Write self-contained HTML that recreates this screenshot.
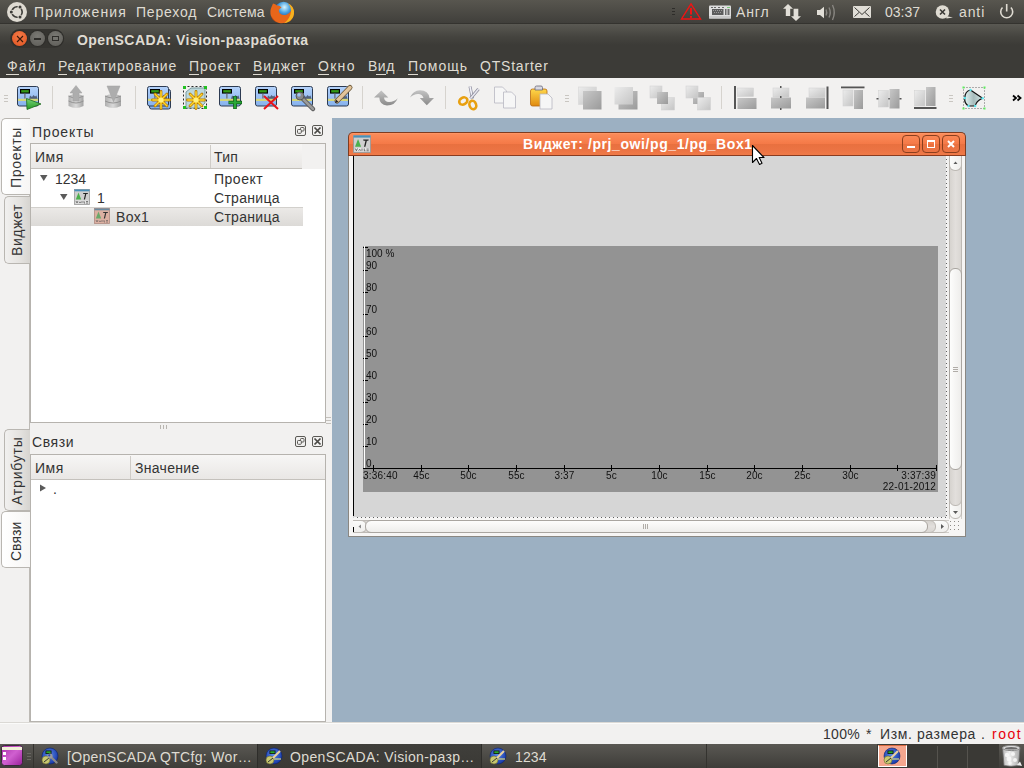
<!DOCTYPE html>
<html><head><meta charset="utf-8">
<style>
*{box-sizing:border-box;margin:0;padding:0}
html,body{width:1024px;height:768px;overflow:hidden;background:#f2f1f0;font-family:"Liberation Sans",sans-serif;font-size:13px;color:#3c3c3c;position:relative}
.a{position:absolute}
.t{position:absolute;white-space:pre;line-height:1}
svg{position:absolute;overflow:visible}
#toppanel{left:0;top:0;width:1024px;height:24px;background:linear-gradient(#58564f,#403f3b);border-bottom:1px solid #34332f}
#titlebar{left:0;top:24px;width:1024px;height:28px;background:linear-gradient(#5a5953,#45443f 45%,#3c3b37 75%)}
#menubar{left:0;top:52px;width:1024px;height:26px;background:#3c3b37}
#toolbar{left:0;top:78px;width:1024px;height:40px;background:#f2f1f0}
.pt{color:#dfdbd2;font-size:14px}
.mt{color:#dfdbd2;font-size:14px}
.ul{position:absolute;height:1px;background:#dfdbd2}
#mdi{left:332px;top:118px;width:692px;height:604px;background:#9cb0c2}
#status{left:0;top:722px;width:1024px;height:22px;background:#f2f1f0}
#bottompanel{left:0;top:744px;width:1024px;height:24px;background:linear-gradient(#4a4944,#3c3b37)}
.box{position:absolute;background:#fff;border:1px solid #b6b3ae}
.hdr{position:absolute;background:linear-gradient(#f7f6f5,#e9e7e5);border-bottom:1px solid #c4c1bc}
.tab{position:absolute;border:1px solid #b9b6b1;border-right:none;border-radius:5px 0 0 5px;background:linear-gradient(90deg,#f1f0ef,#e4e2df 60%,#d6d4d0)}
.tabsel{background:linear-gradient(90deg,#ffffff,#f7f6f5)}
.vt{position:absolute;white-space:pre;line-height:1;transform:rotate(-90deg);transform-origin:0 0;font-size:14px;color:#333}
.dbtn{position:absolute;width:11px;height:11px;border:1px solid #5a5955;border-radius:2px}
.cl{font-size:10px;color:#111;will-change:transform}
.tb{color:#333;font-size:14px}
</style></head><body>

<!-- TOP PANEL -->
<div id="toppanel" class="a"></div>
<div class="t pt" style="left:34px;top:5px;letter-spacing:1.1px">Приложения</div>
<div class="t pt" style="left:136px;top:5px;letter-spacing:0.8px">Переход</div>
<div class="t pt" style="left:207px;top:5px;letter-spacing:0.2px">Система</div>
<div class="t pt" style="left:736px;top:5px;letter-spacing:0.9px">Англ</div>
<div class="t pt" style="left:885px;top:5px;letter-spacing:0px">03:37</div>
<div class="t pt" style="left:959px;top:5px;letter-spacing:0.9px">anti</div>


<svg style="left:0;top:0" width="1024" height="24" viewBox="0 0 1024 24">
<defs>
<radialGradient id="gff" cx=".55" cy=".3" r=".7"><stop offset="0" stop-color="#d8f6ff"/><stop offset=".45" stop-color="#48a0e0"/><stop offset="1" stop-color="#0a3088"/></radialGradient>
</defs>
<!-- ubuntu logo -->
<circle cx="17" cy="12" r="10" fill="#dfdbd2"/>
<circle cx="17" cy="12" r="5.2" fill="none" stroke="#3c3b37" stroke-width="1.6"/>
<g fill="#dfdbd2"><circle cx="11.8" cy="12" r="2.2"/><circle cx="19.6" cy="7.5" r="2.2"/><circle cx="19.6" cy="16.5" r="2.2"/></g>
<g fill="#3c3b37"><circle cx="11.3" cy="12" r="1.5"/><circle cx="20" cy="7" r="1.5"/><circle cx="20" cy="17" r="1.5"/></g>
<!-- firefox -->
<circle cx="283.5" cy="10.8" r="9" fill="url(#gff)"/>
<path d="M273 3.5 Q275.5 4 277 5.5 Q279.5 5 281.5 7.5 L279.5 9 Q278 11 280 13.5 Q283 16 287 14.5 Q291 12.5 292 8 Q290 5 288 3.5 Q293 5.5 294 11 Q294.5 17 290 21 Q285 24 279 23 Q273 21.5 271 16 Q269.5 11 271.5 7 Z" fill="#e8661a"/>
<path d="M288 3.5 Q293 5.5 294 11 Q294.5 17 290 21 Q287 23 284 23.3 Q290 19 291 12 Q291.5 7 288 3.5 Z" fill="#f6b21e"/>
<path d="M271 16 Q273 21.5 279 23 Q275 22 272.5 18 Z" fill="#b83a0a"/>
<!-- grip -->
<g fill="#2e2d2a"><rect x="672" y="8" width="3" height="1"/><rect x="672" y="11" width="3" height="1"/><rect x="672" y="14" width="3" height="1"/></g>
<!-- warning -->
<path d="M691 3.8 L700.5 19 H681.5 Z" fill="none" stroke="#f01414" stroke-width="1.4" stroke-linejoin="miter"/>
<rect x="690" y="8" width="2" height="6.5" fill="#f01414"/><rect x="690" y="16" width="2" height="1.8" fill="#f01414"/>
<!-- keyboard -->
<rect x="709" y="5.5" width="22" height="13" rx="1" fill="#dedede"/>
<rect x="709" y="16" width="22" height="2.5" fill="#c8c8c8"/>
<g fill="#6a6a6a"><rect x="711" y="7" width="2" height="1"/><rect x="714" y="7" width="2" height="1"/><rect x="718" y="7" width="2" height="1"/><rect x="722" y="7" width="2" height="1"/></g>
<rect x="712" y="9" width="11.5" height="6" fill="#5c5c5c"/>
<g fill="#9a9a9a"><rect x="713" y="10" width="1" height="1"/><rect x="715" y="10" width="1" height="1"/><rect x="717" y="10" width="1" height="1"/><rect x="719" y="10" width="1" height="1"/><rect x="721" y="10" width="1" height="1"/><rect x="714" y="12" width="1" height="1"/><rect x="716" y="12" width="1" height="1"/><rect x="718" y="12" width="1" height="1"/><rect x="720" y="12" width="1" height="1"/></g>
<rect x="725" y="9" width="1.5" height="6" fill="#6a6a6a"/><rect x="727.5" y="9" width="2" height="6" fill="#6a6a6a"/>
<rect x="727" y="7" width="3" height="1" fill="#78c878"/>
<!-- network -->
<path d="M788 4 L793 8.8 H790.2 V16 H785.8 V8.8 H783 Z" fill="#e2dfd8"/>
<path d="M796 21 L801 16.2 H798.3 V8.8 H793.6 V16.2 H791 Z" fill="#e2dfd8"/>
<!-- volume -->
<path d="M817 10 H820 L824 6.8 V18.2 L820 15 H817 Z" fill="#e2dfd8"/>
<g fill="none" stroke="#8a8883" stroke-width="1.3"><path d="M826 9.5 Q827.5 12.5 826 15.5"/><path d="M829 7.5 Q831.5 12.5 829 17.5"/><path d="M832.5 5 Q836 12.5 832.5 20"/></g>
<!-- mail -->
<rect x="853" y="6" width="18" height="12" rx="1" fill="#e0ddd6"/>
<path d="M854.5 7.5 L862 14.5 L869.5 7.5 M854.5 16.5 L859 12.5 M869.5 16.5 L865 12.5" fill="none" stroke="#3a3935" stroke-width="1"/>
<!-- chat -->
<circle cx="942.5" cy="12" r="6.8" fill="#dfdbd2"/>
<path d="M946 16 L953 17.5 L946.5 18.5 Z" fill="#dfdbd2"/>
<path d="M940 9.5 L945 14.5 M945 9.5 L940 14.5" stroke="#3a3935" stroke-width="1.6"/>
<!-- power -->
<path d="M1002.5 7.5 A6 6 0 1 0 1010.9 7.5" fill="none" stroke="#dfdbd2" stroke-width="1.6"/>
<rect x="1005.9" y="4" width="1.6" height="7.5" fill="#dfdbd2"/>
</svg>

<!-- TITLE BAR -->
<div id="titlebar" class="a"></div>
<div class="t" style="left:77px;top:33px;font-size:14px;font-weight:bold;color:#dfdbd2;letter-spacing:0.45px">OpenSCADA: Vision-разработка</div>


<!-- window controls -->
<div class="a" style="left:10px;top:29px;width:54px;height:19px;border-radius:10px;background:#353430"></div>
<div class="a" style="left:12px;top:31px;width:15px;height:15px;border-radius:50%;background:radial-gradient(circle at 50% 35%,#f47a48,#e0531f);box-shadow:0 0 0 1px #2e2d2a"></div>
<svg style="left:16px;top:35px" width="8" height="8"><path d="M1 1L7 7M7 1L1 7" stroke="#3a1a0c" stroke-width="1.1"/></svg>
<div class="a" style="left:30px;top:31px;width:15px;height:15px;border-radius:50%;background:radial-gradient(circle at 50% 35%,#7a7974,#5c5b56);box-shadow:0 0 0 1px #2e2d2a"></div>
<div class="a" style="left:34px;top:38px;width:7px;height:1.5px;background:#2e2d2a"></div>
<div class="a" style="left:48px;top:31px;width:15px;height:15px;border-radius:50%;background:radial-gradient(circle at 50% 35%,#7a7974,#5c5b56);box-shadow:0 0 0 1px #2e2d2a"></div>
<div class="a" style="left:52px;top:36px;width:7px;height:5px;border:1px solid #2e2d2a"></div>

<!-- MENU BAR -->
<div id="menubar" class="a"></div>
<div class="t mt" style="left:7px;top:59px;letter-spacing:1.3px">Файл</div>
<div class="t mt" style="left:58px;top:59px;letter-spacing:0.9px">Редактирование</div>
<div class="t mt" style="left:189px;top:59px;letter-spacing:1.0px">Проект</div>
<div class="t mt" style="left:253px;top:59px;letter-spacing:0.8px">Виджет</div>
<div class="t mt" style="left:318px;top:59px;letter-spacing:1.3px">Окно</div>
<div class="t mt" style="left:368px;top:59px;letter-spacing:0.5px">Вид</div>
<div class="t mt" style="left:408px;top:59px;letter-spacing:1.0px">Помощь</div>
<div class="t mt" style="left:480px;top:59px;letter-spacing:0.8px">QTStarter</div>

<!-- TOOLBAR -->
<div id="toolbar" class="a"></div>



<svg style="left:0;top:0" width="1024" height="768" viewBox="0 0 1024 768">
<defs>
<linearGradient id="gblue" x1="0" y1="0" x2="0" y2="1"><stop offset="0" stop-color="#b4d2fa"/><stop offset="1" stop-color="#86b2ee"/></linearGradient>
<linearGradient id="ggray" x1="0" y1="0" x2="1" y2="1"><stop offset="0" stop-color="#ececec"/><stop offset="1" stop-color="#c4c4c4"/></linearGradient>
<linearGradient id="gdark" x1="0" y1="0" x2="1" y2="1"><stop offset="0" stop-color="#c8c8c8"/><stop offset="1" stop-color="#9a9a9a"/></linearGradient>
<linearGradient id="gdb" x1="0" y1="0" x2="1" y2="0"><stop offset="0" stop-color="#a8a8a8"/><stop offset=".5" stop-color="#d8d8d8"/><stop offset="1" stop-color="#9a9a9a"/></linearGradient>
<linearGradient id="ggreen" x1="0" y1="0" x2="0" y2="1"><stop offset="0" stop-color="#7ad37a"/><stop offset="1" stop-color="#249a24"/></linearGradient>
<linearGradient id="gyel" x1="0" y1="0" x2="0" y2="1"><stop offset="0" stop-color="#ffd84a"/><stop offset="1" stop-color="#e08a10"/></linearGradient>
<symbol id="vis" width="24" height="24" viewBox="0 0 24 24" overflow="visible">
<rect x="0.5" y="0.5" width="21" height="19.5" rx="2" fill="url(#gblue)" stroke="#2d3b52"/>
<rect x="3" y="3" width="10" height="4.6" fill="#000"/>
<rect x="4.2" y="4.1" width="7.6" height="2.4" fill="#38a818" opacity=".9"/>
<rect x="7.3" y="7.6" width="1.2" height="5" fill="#6a6a6a"/>
<path d="M12 13 L13 9.5 L15 11 L16.5 9 L18 10.5 L19.5 9.5 L20.5 13 Z" fill="#394255" opacity=".75"/>
<rect x="1" y="12.8" width="20" height="2.2" fill="#d4d67a"/>
</symbol>
<symbol id="star" width="20" height="20" viewBox="-10 -10 20 20" overflow="visible">
<g stroke="#b87a00" stroke-width="2.8" stroke-linecap="round"><path d="M0 -8.5V8.5M-8.5 0H8.5M-6 -6L6 6M-6 6L6 -6"/></g>
<g stroke="#ffd62a" stroke-width="1.5" stroke-linecap="round"><path d="M0 -8.2V8.2M-8.2 0H8.2M-5.8 -5.8L5.8 5.8M-5.8 5.8L5.8 -5.8"/></g>
<circle r="2.6" fill="#fff080"/>
</symbol>
</defs>
<!-- grip -->
<g fill="#c9c6c1"><rect x="4" y="95" width="4" height="1"/><rect x="4" y="98" width="4" height="1"/><rect x="4" y="101" width="4" height="1"/></g>
<!-- icon1 play -->
<use href="#vis" x="17" y="86"/>
<path d="M26.5 98.5 L41 104 L27 109.5 Z" fill="url(#ggreen)" stroke="#1d6a1d" stroke-width=".8"/>
<rect x="52" y="86" width="1" height="23" fill="#d6d3ce"/>
<!-- db up -->
<g opacity=".9">
<path d="M68.5 96 Q76 92 83.5 96 V106 Q76 110 68.5 106 Z" fill="url(#gdb)"/>
<path d="M68.5 101 Q76 105 83.5 101" stroke="#8a8a8a" fill="none"/>
<path d="M68.5 96 Q76 100 83.5 96" stroke="#8a8a8a" fill="none"/>
<path d="M76 85.5 L82 93 H79 V101 H73 V93 H70 Z" fill="#a6a6a6" stroke="#9a9a9a" stroke-width=".5"/>
</g>
<!-- db down -->
<g opacity=".9">
<path d="M105 96 Q113 92 121 96 V106 Q113 110 105 106 Z" fill="url(#gdb)"/>
<path d="M105 101 Q113 105 121 101" stroke="#8a8a8a" fill="none"/>
<path d="M105 96 Q113 100 121 96" stroke="#8a8a8a" fill="none"/>
<path d="M107 86 H120 L113.5 102 Z" fill="#a6a6a6" stroke="#9a9a9a" stroke-width=".5"/>
</g>
<rect x="135" y="86" width="1" height="23" fill="#d6d3ce"/>
<!-- icon4 stacked + star -->
<rect x="149.5" y="89.5" width="21" height="19.5" rx="2" fill="#86b2ee" stroke="#2d3b52"/>
<use href="#vis" x="147" y="86"/>
<use href="#star" x="151" y="90"/>
<!-- icon5 dashed cube + star -->
<rect x="183.5" y="86.5" width="23" height="22" fill="none" stroke="#2a2a2a" stroke-dasharray="2 2"/>
<path d="M186 92 L191 88 H205 V103 L200 108 H186 Z" fill="#bcd8dc" stroke="#7a9aa0"/>
<g fill="#22c022"><rect x="183" y="86" width="3" height="3"/><rect x="204" y="86" width="3" height="3"/><rect x="183" y="106" width="3" height="3"/><rect x="204" y="106" width="3" height="3"/></g>
<use href="#star" x="186" y="90"/>
<!-- icon6 plus -->
<use href="#vis" x="219" y="86"/>
<path d="M235 96 V109 M228.5 102.5 H242" stroke="#0c5a14" stroke-width="3.6"/>
<path d="M235 96.5 V108.5 M229 102.5 H241.5" stroke="#2aa838" stroke-width="2"/>
<!-- icon7 red X -->
<use href="#vis" x="255" y="86"/>
<path d="M264 96 L278 109 M278 96 L264 109" stroke="#e8141a" stroke-width="2"/>
<!-- icon8 wrench -->
<use href="#vis" x="291" y="86"/>
<path d="M300 96 L313 109" stroke="#5a5a5a" stroke-width="4.5" stroke-linecap="round"/>
<path d="M300 96 L313 109" stroke="#9a9a9a" stroke-width="2.5" stroke-linecap="round"/>
<circle cx="300" cy="96" r="4" fill="#8a8a8a" stroke="#4a4a4a" stroke-width=".8"/>
<circle cx="299" cy="95" r="1.8" fill="url(#gblue)"/>
<!-- icon9 pencil -->
<use href="#vis" x="327" y="86"/>
<path d="M337 101 L350 87.5" stroke="#6e5a3c" stroke-width="5" stroke-linecap="round"/>
<path d="M337 101 L350 87.5" stroke="#e2c49a" stroke-width="3.4" stroke-linecap="round"/>
<path d="M335 103 L338.5 102 L336 99.5 Z" fill="#222"/>
<rect x="362" y="86" width="1" height="23" fill="#d6d3ce"/>
<!-- undo -->
<linearGradient id="gundo" x1="0" y1="0" x2="0" y2="1"><stop offset="0" stop-color="#c4c4c4"/><stop offset="1" stop-color="#8a8a8a"/></linearGradient>
<path d="M381.3 90.6 L388.3 97.6 H384 Q384.5 102 389 102 Q394 102 397.7 98.2 Q395 105.5 387 105.5 Q379.5 105 379.3 97.6 H374 Z" fill="url(#gundo)"/>
<!-- redo -->
<path d="M426.8 105.2 L434 98 H429.5 Q428.5 90.5 420 90.3 Q413 90.5 410 97.5 Q414 93.5 419 94 Q422.5 94.5 423.5 98 H419.8 Z" fill="url(#gundo)"/>
<rect x="445" y="86" width="1" height="23" fill="#d6d3ce"/>
<!-- scissors -->
<path d="M470 86.5 L472.5 98.5" stroke="#8a8a9a" stroke-width="3"/>
<path d="M470 86.5 L472.5 98.5" stroke="#f0f0f8" stroke-width="1.6"/>
<path d="M478.5 89 L470.5 98.5" stroke="#8a8a9a" stroke-width="3"/>
<path d="M478.5 89 L470.5 98.5" stroke="#e8e8f0" stroke-width="1.6"/>
<ellipse cx="463.3" cy="101" rx="4.3" ry="3.3" transform="rotate(-30 463.3 101)" fill="none" stroke="#e8a010" stroke-width="2.6"/>
<ellipse cx="472.8" cy="105" rx="3.3" ry="4.3" transform="rotate(-20 472.8 105)" fill="none" stroke="#e8a010" stroke-width="2.6"/>
<!-- copy -->
<path d="M494.5 87 H502.5 L506.5 91 V103 H494.5 Z" fill="#f6f6f6" stroke="#b8b8c2" stroke-width=".8"/>
<path d="M503.5 92 H511.5 L515.5 96 V108 H503.5 Z" fill="#f6f6f6" stroke="#b8b8c2" stroke-width=".8"/>
<!-- paste -->
<rect x="530.5" y="89" width="16.5" height="17" rx="2" fill="url(#gyel)" stroke="#b86a10" stroke-width=".8"/>
<path d="M535 90 V87.5 Q535 86 536.5 86 H541 Q542.5 86 542.5 87.5 V90 Z" fill="#d8d8e0" stroke="#6a6a7a" stroke-width=".8"/>
<path d="M540 94 H548 L552 98 V109 H540 Z" fill="#f6f6f6" stroke="#b8b8c2" stroke-width=".8"/>
<!-- grip 2 -->
<g fill="#c9c6c1"><rect x="565" y="95" width="4" height="1"/><rect x="565" y="98" width="4" height="1"/><rect x="565" y="101" width="4" height="1"/></g>
<!-- raise -->
<rect x="578.5" y="87" width="18" height="17.5" fill="url(#ggray)" stroke="#d8d8d8" stroke-width=".6"/>
<rect x="583" y="91" width="18.5" height="18.5" fill="url(#gdark)"/>
<!-- lower -->
<rect x="618.5" y="91" width="19" height="18.5" fill="url(#gdark)"/>
<rect x="614.5" y="87" width="18.5" height="17.5" fill="url(#ggray)"/>
<!-- icon C -->
<rect x="650" y="86" width="12" height="12" fill="url(#ggray)" stroke="#d0d0d0" stroke-width=".5"/>
<rect x="661.5" y="97.5" width="13" height="12.5" fill="url(#ggray)" stroke="#d0d0d0" stroke-width=".5"/>
<rect x="657" y="92" width="11" height="12" fill="url(#gdark)"/>
<!-- icon D -->
<rect x="693" y="92" width="11" height="12" fill="url(#gdark)"/>
<rect x="686" y="86" width="12" height="12" fill="url(#ggray)" stroke="#d0d0d0" stroke-width=".5"/>
<rect x="697.5" y="97.5" width="13" height="12.5" fill="url(#ggray)" stroke="#d0d0d0" stroke-width=".5"/>
<rect x="721" y="86" width="1" height="23" fill="#d6d3ce"/>
<!-- align left -->
<rect x="734" y="86" width="2" height="23" fill="#555"/>
<rect x="737.5" y="88" width="16" height="8.5" fill="url(#ggray)" stroke="#d0d0d0" stroke-width=".5"/>
<rect x="737.5" y="98" width="19" height="11" fill="url(#gdark)"/>
<!-- align hcenter -->
<rect x="773" y="88" width="16" height="9" fill="url(#ggray)" stroke="#d0d0d0" stroke-width=".5"/>
<rect x="771" y="97.5" width="20" height="11" fill="url(#gdark)"/>
<g fill="#555"><rect x="780" y="86" width="1.5" height="2"/><rect x="780" y="96" width="1.5" height="2"/><rect x="780" y="108" width="1.5" height="2"/></g>
<!-- align right -->
<rect x="809" y="88" width="16" height="9" fill="url(#ggray)" stroke="#d0d0d0" stroke-width=".5"/>
<rect x="806" y="97.5" width="19" height="11" fill="url(#gdark)"/>
<rect x="826.5" y="86.5" width="2" height="22.5" fill="#555"/>
<!-- align top -->
<rect x="841" y="86.5" width="23.5" height="1.8" fill="#555"/>
<rect x="843" y="90" width="10" height="16" fill="url(#ggray)" stroke="#d0d0d0" stroke-width=".5"/>
<rect x="854" y="90" width="9" height="19" fill="url(#gdark)"/>
<!-- align vcenter -->
<rect x="878.5" y="90.5" width="10" height="16.5" fill="url(#ggray)" stroke="#d0d0d0" stroke-width=".5"/>
<rect x="889.5" y="89" width="10" height="19.5" fill="url(#gdark)"/>
<g fill="#555"><rect x="876.5" y="98" width="2" height="1.5"/><rect x="888.3" y="98" width="1.5" height="1.5"/><rect x="899.5" y="98" width="2" height="1.5"/></g>
<!-- align bottom -->
<rect x="914.5" y="90.5" width="10.5" height="15.5" fill="url(#ggray)" stroke="#d0d0d0" stroke-width=".5"/>
<rect x="926" y="87" width="9.5" height="19" fill="url(#gdark)"/>
<rect x="914" y="107" width="22.5" height="2" fill="#555"/>
<!-- grip 3 -->
<g fill="#c9c6c1"><rect x="949" y="95" width="4" height="1"/><rect x="949" y="98" width="4" height="1"/><rect x="949" y="101" width="4" height="1"/></g>
<!-- edit shape -->
<linearGradient id="gshape" x1="0" y1="0" x2="1" y2="0"><stop offset="0" stop-color="#e0f4f4"/><stop offset=".5" stop-color="#a8bcbc"/><stop offset="1" stop-color="#d0e4e4"/></linearGradient>
<rect x="963.5" y="87.5" width="21" height="21" fill="none" stroke="#555" stroke-dasharray="1 2" stroke-width=".9"/>
<g fill="#5ef05e"><rect x="962.5" y="86.5" width="2" height="2"/><rect x="983.5" y="86.5" width="2" height="2"/><rect x="962.5" y="107.5" width="2" height="2"/><rect x="983.5" y="107.5" width="2" height="2"/></g>
<path d="M970.5 90 L982.6 98.2 Q976 101 975.2 106 H968.5 Q964 103 964.8 98 Q965 91 970.5 90 Z" fill="url(#gshape)" stroke="#111" stroke-width="1.2" stroke-linejoin="round"/>
<g fill="#5ae8f0"><circle cx="970.5" cy="90" r="1.2"/><circle cx="982.6" cy="98.2" r="1.2"/><circle cx="975.2" cy="106" r="1.2"/><circle cx="968.5" cy="106" r="1.2"/><circle cx="964.8" cy="98" r="1.2"/></g>
<!-- chevrons -->
<path d="M1013 95.5 L1016 98 L1013 100.5 M1017.5 95.5 L1020.5 98 L1017.5 100.5" stroke="#000" stroke-width="1.8" fill="none"/>
</svg>

<!-- LEFT DOCK TABS -->
<div class="a" style="left:29px;top:118px;width:1px;height:604px;background:#bdbab5"></div>
<div class="tab tabsel" style="left:1px;top:118px;width:29px;height:77px"></div>
<div class="vt" style="left:9px;top:188px;letter-spacing:0.7px">Проекты</div>
<div class="tab" style="left:4px;top:196px;width:26px;height:68px"></div>
<div class="vt" style="left:10px;top:256px;letter-spacing:0.6px">Виджет</div>
<div class="tab" style="left:4px;top:429px;width:26px;height:82px"></div>
<div class="vt" style="left:10px;top:505px;letter-spacing:0.8px">Атрибуты</div>
<div class="tab tabsel" style="left:1px;top:511px;width:29px;height:57px"></div>
<div class="vt" style="left:9px;top:561px;letter-spacing:0px">Связи</div>

<!-- PROJECTS DOCK -->
<div class="t tb" style="left:32px;top:125px;letter-spacing:0.9px">Проекты</div>
<div class="dbtn" style="left:295px;top:125px"></div>
<div class="dbtn" style="left:312px;top:125px"></div>
<div class="box" style="left:30px;top:143px;width:296px;height:280px"></div>
<div class="hdr" style="left:31px;top:144px;width:272px;height:25px"></div>
<div class="a" style="left:210px;top:145px;width:1px;height:23px;background:#cfccc7"></div>
<div class="a" style="left:302px;top:144px;width:23px;height:25px;background:#f2f1f0"></div>
<div class="t tb" style="left:35px;top:150px;letter-spacing:0.5px">Имя</div>
<div class="t tb" style="left:214px;top:150px;letter-spacing:0.3px">Тип</div>
<div class="a" style="left:31px;top:207px;width:272px;height:19px;background:linear-gradient(#ebe9e7,#dcdad7);border-top:1px solid #d2d0cc"></div>
<div class="t tb" style="left:55px;top:172px;letter-spacing:0px">1234</div>
<div class="t tb" style="left:214px;top:172px;letter-spacing:0.5px">Проект</div>
<div class="t tb" style="left:97px;top:191px">1</div>
<div class="t tb" style="left:214px;top:191px;letter-spacing:0.3px">Страница</div>
<div class="t tb" style="left:116px;top:210px;letter-spacing:0.3px">Box1</div>
<div class="t tb" style="left:214px;top:210px;letter-spacing:0.3px">Страница</div>

<!-- splitter grip -->
<div class="a" style="left:160px;top:425px;width:1px;height:4px;background:#b8b5b0"></div>
<div class="a" style="left:163px;top:425px;width:1px;height:4px;background:#b8b5b0"></div>
<div class="a" style="left:166px;top:425px;width:1px;height:4px;background:#b8b5b0"></div>

<!-- LINKS DOCK -->
<div class="t tb" style="left:32px;top:435px;letter-spacing:0.6px">Связи</div>
<div class="dbtn" style="left:295px;top:436px"></div>
<div class="dbtn" style="left:312px;top:436px"></div>
<div class="box" style="left:30px;top:454px;width:296px;height:268px"></div>
<div class="hdr" style="left:31px;top:455px;width:294px;height:25px"></div>
<div class="a" style="left:130px;top:456px;width:1px;height:23px;background:#cfccc7"></div>
<div class="t tb" style="left:35px;top:461px;letter-spacing:0.5px">Имя</div>
<div class="t tb" style="left:135px;top:461px;letter-spacing:0.3px">Значение</div>
<div class="t tb" style="left:53px;top:482px">.</div>

<!-- MDI AREA -->
<div id="mdi" class="a"></div>


<!-- MDI WINDOW -->
<div class="a" style="left:348px;top:150px;width:618px;height:387px;background:#f6f5f4;border:1px solid #8a8782;border-top:none"></div>
<div class="a" style="left:348px;top:132px;width:618px;height:24px;border:1px solid #7e3c20;border-bottom-color:#8a3c20;border-radius:5px 5px 0 0;background:linear-gradient(#ff9a6a 0px,#fb8a58 1.5px,#f57a48 10.5px,#e8703f 11px,#ec7444 18px,#f07a48 22px)"></div>
<div class="t" style="left:523px;top:137px;font-size:14px;font-weight:bold;color:#fff;letter-spacing:0.58px">Виджет: /prj_owi/pg_1/pg_Box1</div>
<!-- title buttons -->
<div class="a" style="left:902px;top:135px;width:18px;height:18px;border:1px solid #8a3f1e;border-radius:4px"></div>
<div class="a" style="left:922px;top:135px;width:18px;height:18px;border:1px solid #8a3f1e;border-radius:4px"></div>
<div class="a" style="left:942px;top:135px;width:18px;height:18px;border:1px solid #8a3f1e;border-radius:4px"></div>
<div class="a" style="left:907px;top:146px;width:8px;height:2px;background:#fff"></div>
<div class="a" style="left:927px;top:140px;width:8px;height:8px;border:1px solid #fff;border-top-width:2px"></div>
<svg style="left:947px;top:140px" width="8" height="8"><path d="M1 1L7 7M7 1L1 7" stroke="#fff" stroke-width="2"/></svg>
<!-- client -->
<div class="a" style="left:353px;top:156px;width:594px;height:362px;background:#d6d6d6"></div>
<div class="a" style="left:353px;top:156px;width:1px;height:360px;background:#000"></div>
<div class="a" style="left:946px;top:156px;width:1px;height:362px;background-image:linear-gradient(#f4f4f4 70%,#606060 70%);background-size:1px 4px"></div>
<div class="a" style="left:354px;top:517px;width:593px;height:1px;background-image:linear-gradient(90deg,#f4f4f4 70%,#606060 70%);background-size:4px 1px"></div>
<div class="a" style="left:947px;top:156px;width:2px;height:362px;background:#f2f1f0"></div>
<!-- vscroll -->
<div class="a" style="left:949px;top:156px;width:13px;height:363px;background:#f6f5f4;border-left:1px solid #d0cdc8;border-right:1px solid #d0cdc8"></div>
<div class="a" style="left:949px;top:494px;width:13px;height:25px;background:linear-gradient(90deg,#fbfbfa,#efeeec);border:1px solid #bdb9b4;border-radius:6px"></div>
<div class="a" style="left:949px;top:158px;width:13px;height:348px;background:linear-gradient(90deg,#d6d3cf,#e2dfdc 50%,#d9d6d2);border:1px solid #bdb9b4;border-radius:6px"></div>
<div class="a" style="left:949px;top:156px;width:13px;height:15px;background:linear-gradient(90deg,#fbfbfa,#efeeec);border:1px solid #bdb9b4;border-top:none;border-radius:0 0 6px 6px"></div>
<div class="a" style="left:949px;top:268px;width:13px;height:202px;background:linear-gradient(90deg,#fdfdfc,#eeedeb);border:1px solid #a9a5a0;border-radius:6px"></div>
<svg style="left:952px;top:160px" width="7" height="5"><path d="M1.5 4L3.5 1.5L5.5 4Z" fill="#5a5a5a"/></svg>
<svg style="left:952px;top:510px" width="7" height="5"><path d="M1 1H6L3.5 4Z" fill="#5a5a5a"/></svg>
<div class="a" style="left:953px;top:367px;width:5px;height:1px;background:#b0aca7"></div>
<div class="a" style="left:953px;top:369px;width:5px;height:1px;background:#b0aca7"></div>
<div class="a" style="left:953px;top:371px;width:5px;height:1px;background:#b0aca7"></div>
<!-- hscroll -->
<div class="a" style="left:353px;top:520px;width:596px;height:13px;background:#f6f5f4;border-top:1px solid #d0cdc8;border-bottom:1px solid #d0cdc8"></div>
<div class="a" style="left:922px;top:520px;width:27px;height:13px;background:linear-gradient(#fbfbfa,#efeeec);border:1px solid #bdb9b4;border-radius:6px"></div>
<div class="a" style="left:355px;top:520px;width:581px;height:13px;background:linear-gradient(#d6d3cf,#e2dfdc 50%,#d9d6d2);border:1px solid #bdb9b4;border-radius:6px"></div>
<div class="a" style="left:353px;top:520px;width:14px;height:13px;background:linear-gradient(#fbfbfa,#efeeec);border:1px solid #bdb9b4;border-left:none;border-radius:0 6px 6px 0"></div>
<div class="a" style="left:365px;top:520px;width:563px;height:13px;background:linear-gradient(#fdfdfc,#eeedeb);border:1px solid #a9a5a0;border-radius:6px"></div>
<svg style="left:357px;top:523px" width="5" height="7"><path d="M4 1.5L1.5 3.5L4 5.5Z" fill="#8a8a8a"/></svg>
<svg style="left:940px;top:523px" width="5" height="7"><path d="M1 1V6L4 3.5Z" fill="#5a5a5a"/></svg>
<div class="a" style="left:643px;top:524px;width:1px;height:5px;background:#b0aca7"></div>
<div class="a" style="left:645px;top:524px;width:1px;height:5px;background:#b0aca7"></div>
<div class="a" style="left:647px;top:524px;width:1px;height:5px;background:#b0aca7"></div>
<svg style="left:950px;top:521px" width="11" height="11"><g fill="#8e8b87"><rect x="0" y="0" width="1" height="1"/><rect x="4" y="0" width="1" height="1"/><rect x="8" y="0" width="1" height="1"/><rect x="0" y="4" width="1" height="1"/><rect x="4" y="4" width="1" height="1"/><rect x="8" y="4" width="1" height="1"/><rect x="0" y="8" width="1" height="1"/><rect x="4" y="8" width="1" height="1"/><rect x="8" y="8" width="1" height="1"/></g></svg>
<div class="a" style="left:353px;top:527px;width:1px;height:5px;background:#000"></div>

<!-- CHART -->
<div class="a" style="left:363px;top:246px;width:575px;height:246px;background:#939393"></div>
<div class="a" style="left:363px;top:468px;width:574px;height:1px;background:#000"></div>
<div class="a" style="left:363px;top:247px;width:5px;height:1px;background:#000"></div>
<div class="a" style="left:363px;top:270px;width:5px;height:1px;background:#000"></div>
<div class="a" style="left:363px;top:292px;width:5px;height:1px;background:#000"></div>
<div class="a" style="left:363px;top:314px;width:5px;height:1px;background:#000"></div>
<div class="a" style="left:363px;top:336px;width:5px;height:1px;background:#000"></div>
<div class="a" style="left:363px;top:358px;width:5px;height:1px;background:#000"></div>
<div class="a" style="left:363px;top:380px;width:5px;height:1px;background:#000"></div>
<div class="a" style="left:363px;top:402px;width:5px;height:1px;background:#000"></div>
<div class="a" style="left:363px;top:424px;width:5px;height:1px;background:#000"></div>
<div class="a" style="left:363px;top:446px;width:5px;height:1px;background:#000"></div>
<div class="a" style="left:363px;top:468px;width:5px;height:1px;background:#000"></div>
<div class="t cl" style="left:366px;top:249px">100 %</div>
<div class="t cl" style="left:366px;top:261px">90</div>
<div class="t cl" style="left:366px;top:283px">80</div>
<div class="t cl" style="left:366px;top:305px">70</div>
<div class="t cl" style="left:366px;top:327px">60</div>
<div class="t cl" style="left:366px;top:349px">50</div>
<div class="t cl" style="left:366px;top:371px">40</div>
<div class="t cl" style="left:366px;top:393px">30</div>
<div class="t cl" style="left:366px;top:415px">20</div>
<div class="t cl" style="left:366px;top:437px">10</div>
<div class="t cl" style="left:366px;top:459px">0</div>
<div class="a" style="left:364px;top:246px;width:1px;height:222px;background:#fff"></div>
<div class="a" style="left:373px;top:465px;width:1px;height:6px;background:#000"></div>
<div class="t cl" style="left:363px;top:471px;letter-spacing:0.2px">3:36:40</div>
<div class="a" style="left:421px;top:465px;width:1px;height:6px;background:#000"></div>
<div class="t cl" style="left:381px;top:471px;width:81px;text-align:center;letter-spacing:0.1px">45c</div>
<div class="a" style="left:468px;top:465px;width:1px;height:6px;background:#000"></div>
<div class="t cl" style="left:428px;top:471px;width:81px;text-align:center;letter-spacing:0.1px">50c</div>
<div class="a" style="left:516px;top:465px;width:1px;height:6px;background:#000"></div>
<div class="t cl" style="left:476px;top:471px;width:81px;text-align:center;letter-spacing:0.1px">55c</div>
<div class="a" style="left:564px;top:465px;width:1px;height:6px;background:#000"></div>
<div class="t cl" style="left:524px;top:471px;width:81px;text-align:center;letter-spacing:0.1px">3:37</div>
<div class="a" style="left:611px;top:465px;width:1px;height:6px;background:#000"></div>
<div class="t cl" style="left:571px;top:471px;width:81px;text-align:center;letter-spacing:0.1px">5c</div>
<div class="a" style="left:659px;top:465px;width:1px;height:6px;background:#000"></div>
<div class="t cl" style="left:619px;top:471px;width:81px;text-align:center;letter-spacing:0.1px">10c</div>
<div class="a" style="left:707px;top:465px;width:1px;height:6px;background:#000"></div>
<div class="t cl" style="left:667px;top:471px;width:81px;text-align:center;letter-spacing:0.1px">15c</div>
<div class="a" style="left:754px;top:465px;width:1px;height:6px;background:#000"></div>
<div class="t cl" style="left:714px;top:471px;width:81px;text-align:center;letter-spacing:0.1px">20c</div>
<div class="a" style="left:802px;top:465px;width:1px;height:6px;background:#000"></div>
<div class="t cl" style="left:762px;top:471px;width:81px;text-align:center;letter-spacing:0.1px">25c</div>
<div class="a" style="left:850px;top:465px;width:1px;height:6px;background:#000"></div>
<div class="t cl" style="left:810px;top:471px;width:81px;text-align:center;letter-spacing:0.1px">30c</div>
<div class="a" style="left:897px;top:465px;width:1px;height:6px;background:#000"></div>
<div class="a" style="left:936px;top:465px;width:1px;height:6px;background:#000"></div>
<div class="t cl" style="left:836px;top:471px;width:100px;text-align:right;letter-spacing:0.2px">3:37:39</div>
<div class="t cl" style="left:836px;top:482px;width:100px;text-align:right;letter-spacing:0.2px">22-01-2012</div>

<!-- STATUS BAR -->
<div id="status" class="a"></div>
<div class="a" style="left:0;top:722px;width:1024px;height:1px;background:#dbd9d5"></div>
<div class="a" style="left:0;top:723px;width:1024px;height:1px;background:#fbfbfa"></div>
<div class="t tb" style="left:823px;top:727px;letter-spacing:0.3px">100%</div>
<div class="t tb" style="left:866px;top:727px">*</div>
<div class="t tb" style="left:880px;top:727px;letter-spacing:0.6px">Изм. размера</div>
<div class="t tb" style="left:981px;top:727px">.</div>
<div class="t tb" style="left:992px;top:727px;color:#e8000b;letter-spacing:1.5px">root</div>

<!-- BOTTOM PANEL -->

<div class="a" style="left:0;top:744px;width:1024px;height:24px;background:linear-gradient(#5a5853,#3e3d39)"></div>
<div class="a" style="left:257px;top:744px;width:224px;height:24px;background:linear-gradient(#403f3b,#3a3935)"></div>
<div class="a" style="left:877px;top:744px;width:122px;height:24px;background:#3a3935"></div>
<div class="a" style="left:33px;top:744px;width:1px;height:24px;background:#34332f"></div>
<div class="a" style="left:257px;top:744px;width:1px;height:24px;background:#2e2d2a"></div>
<div class="a" style="left:481px;top:744px;width:1px;height:24px;background:#2e2d2a"></div>
<div class="a" style="left:706px;top:744px;width:1px;height:24px;background:#34332f"></div>
<div class="a" style="left:937px;top:746px;width:1px;height:22px;background:#55534e"></div>
<div class="a" style="left:967px;top:746px;width:1px;height:22px;background:#55534e"></div>
<div class="a" style="left:878px;top:745px;width:29px;height:22px;background:#f4a68e;border:1px solid #fff;border-top-color:#d86a40"></div>
<svg style="left:0;top:744px" width="1024" height="24" viewBox="0 744 1024 24">
<defs>
<linearGradient id="gpur" x1="0" y1="0" x2="1" y2="1"><stop offset="0" stop-color="#a830a8"/><stop offset=".5" stop-color="#d060d0"/><stop offset="1" stop-color="#9a209a"/></linearGradient>
<radialGradient id="gosc" cx=".45" cy=".4" r=".6"><stop offset="0" stop-color="#5a8ae8"/><stop offset="1" stop-color="#1838a8"/></radialGradient>
<symbol id="osc" width="18" height="18" viewBox="0 0 18 18" overflow="visible">
<circle cx="9" cy="9" r="8" fill="url(#gosc)" stroke="#0e246a" stroke-width=".6"/>
<rect x="4.5" y="3.5" width="6" height="3.5" fill="#111"/><rect x="5.3" y="4.3" width="4.4" height="1.9" fill="#2aa82a"/>
<circle cx="5" cy="13" r="4" fill="#c8c870" stroke="#6a6a30" stroke-width=".6"/>
<path d="M3 15 L8 11" stroke="#333" stroke-width="1"/>
<path d="M8 11 L15 4" stroke="#e8d0a0" stroke-width="2.2"/>
<path d="M9 12 H16" stroke="#d8d880" stroke-width="1.2"/>
</symbol>
</defs>
<rect x="1.5" y="745.5" width="21" height="20" rx="3" fill="url(#gpur)" stroke="#3a2a3a" stroke-width="1"/>
<rect x="2" y="747" width="20" height="3" fill="#f0f0d8"/>
<rect x="3" y="752" width="3" height="3" fill="#fff"/><rect x="3" y="757" width="3" height="3" fill="#fff"/>
<g fill="#6a6863"><rect x="27" y="753" width="4" height="1"/><rect x="27" y="756" width="4" height="1"/><rect x="27" y="759" width="4" height="1"/></g>
<g transform="translate(41,747)">
<circle cx="9" cy="9" r="8" fill="url(#gosc)" stroke="#0e246a" stroke-width=".6"/>
<rect x="4.5" y="3.5" width="6" height="3.5" fill="#111"/><rect x="5.3" y="4.3" width="4.4" height="1.9" fill="#2aa82a"/>
<circle cx="5" cy="13" r="4" fill="#c8c870" stroke="#6a6a30" stroke-width=".6"/>
<path d="M3 15 L8 11" stroke="#333" stroke-width="1"/>
<path d="M9 9 L15.5 15.5" stroke="#8a8a8a" stroke-width="2.4" stroke-linecap="round"/>
<circle cx="9" cy="9" r="2.6" fill="#9a9a9a"/><circle cx="8.3" cy="8.3" r="1.1" fill="#2a4ab8"/>
</g>
<use href="#osc" x="265" y="747"/>
<use href="#osc" x="489" y="747"/>
<use href="#osc" x="883" y="747"/>
<!-- trash -->
<linearGradient id="gtr" x1="0" y1="0" x2="1" y2="0"><stop offset="0" stop-color="#b8b8b8"/><stop offset=".4" stop-color="#eeeeee"/><stop offset="1" stop-color="#a8a8a8"/></linearGradient>
<path d="M1002.5 748 H1020 L1018.5 765.5 Q1011 767 1004 765.5 Z" fill="url(#gtr)" stroke="#6a6a6a" stroke-width=".8"/>
<ellipse cx="1011.2" cy="748" rx="8.8" ry="2.6" fill="#d8d8d8" stroke="#8a8a8a" stroke-width="1"/>
<ellipse cx="1011.2" cy="748.3" rx="6.5" ry="1.3" fill="#6a6a6a"/>
<g fill="#f8f8f8" opacity=".9"><circle cx="1007" cy="755" r="2.2"/><circle cx="1013" cy="754" r="2"/><circle cx="1009" cy="759" r="2.4"/><circle cx="1015" cy="760" r="2"/><circle cx="1010" cy="763" r="1.8"/></g>
<path d="M1017 765 L1020 761.5 L1022 766 Z" fill="#f0f0f0"/>
</svg>
<div class="t" style="left:67px;top:750px;font-size:14px;color:#dfdbd2;letter-spacing:0.32px">[OpenSCADA QTCfg: Wor…</div>
<div class="t" style="left:290px;top:750px;font-size:14px;color:#dfdbd2;letter-spacing:0.36px">OpenSCADA: Vision-разр…</div>
<div class="t" style="left:515px;top:750px;font-size:14px;color:#dfdbd2;letter-spacing:0.1px">1234</div>



<!-- MISC OVERLAY -->
<svg style="left:0;top:0" width="1024" height="768" viewBox="0 0 1024 768">
<defs>
<symbol id="val" width="16" height="16" viewBox="0 0 16 16" overflow="visible">
<rect x="0.5" y="0.5" width="15" height="15" fill="#cfcfcf" stroke="#9a9a9a" stroke-width=".8"/>
<rect x="0.5" y="0.5" width="15" height="1.8" fill="#4a90b8"/>
<path d="M1.8 10.5 L4.5 3.5 L7.2 10.5 Z" fill="#4cb04c"/>
<path d="M9 4 H14 L13.6 5 H12.3 L11 10.5 H9.8 L11.1 5 H9.4 Z" fill="#222"/>
<rect x="1.5" y="11.5" width="13" height="3" fill="#e8e8e8"/>
<path d="M2 12 L3 14 L4 12 M5 14 Q6 11.5 7 14 M8 12V14 M10 12 V14 H11 M12 12.5 H14 M12 14 H14" stroke="#333" stroke-width=".6" fill="none"/>
</symbol>
<symbol id="valr" width="16" height="16" viewBox="0 0 16 16" overflow="visible">
<rect x="0.5" y="0.5" width="15" height="15" fill="#dcb0a2" stroke="#b08a80" stroke-width=".8"/>
<rect x="0.5" y="0.5" width="15" height="1.8" fill="#6a8aa0"/>
<path d="M1.8 10.5 L4.5 3.5 L7.2 10.5 Z" fill="#6aa86a"/>
<path d="M9 4 H14 L13.6 5 H12.3 L11 10.5 H9.8 L11.1 5 H9.4 Z" fill="#333"/>
<path d="M2 12 L3 14 L4 12 M5 14 Q6 11.5 7 14 M8 12V14 M10 12 V14 H11 M12 12.5 H14 M12 14 H14" stroke="#555" stroke-width=".6" fill="none"/>
</symbol>
</defs>
<!-- dock buttons glyphs -->
<g fill="none" stroke="#5a5955" stroke-width="1">
<rect x="300.5" y="127.5" width="3.5" height="3.5" rx=".8"/><rect x="297.5" y="129.5" width="3.8" height="3.8" rx=".8" fill="#f2f1f0"/>
<rect x="300.5" y="438.5" width="3.5" height="3.5" rx=".8"/><rect x="297.5" y="440.5" width="3.8" height="3.8" rx=".8" fill="#f2f1f0"/>
</g>
<g stroke="#4a4945" stroke-width="1.7"><path d="M314.5 127.5 L320.5 133.5 M320.5 127.5 L314.5 133.5"/><path d="M314.5 438.5 L320.5 444.5 M320.5 438.5 L314.5 444.5"/></g>
<!-- tree triangles -->
<path d="M40 175 H47.5 L43.75 181 Z" fill="#5a5a5a"/>
<path d="M60 194 H67.5 L63.75 200 Z" fill="#5a5a5a"/>
<path d="M40 484.5 V491.5 L46 488 Z" fill="#5a5a5a"/>
<use href="#val" x="74" y="189"/>
<use href="#valr" x="94" y="208"/>
<!-- mdi title icon -->
<g transform="translate(353,135) scale(1.125)"><use href="#val" x="0" y="0"/></g>
<!-- cursor -->
<path d="M752.5 145.5 V162.5 L756.5 158.5 L759.5 164.5 L762 163.3 L759.2 157.5 H764 Z" fill="#fff" stroke="#000" stroke-width="1.1" stroke-linejoin="round"/>
<!-- menu underlines -->
<g fill="#dfdbd2"><rect x="6" y="74" width="13" height="1"/><rect x="58" y="74" width="9" height="1"/><rect x="189" y="74" width="10" height="1"/><rect x="253" y="74" width="9" height="1"/><rect x="318" y="74" width="11" height="1"/><rect x="376" y="74" width="10" height="1"/><rect x="408" y="74" width="10" height="1"/></g>
<!-- right splitter grip -->
<g fill="#c4c1bc"><rect x="326" y="417" width="5" height="1"/><rect x="326" y="420" width="5" height="1"/><rect x="326" y="423" width="5" height="1"/></g>
</svg>

</body></html>
